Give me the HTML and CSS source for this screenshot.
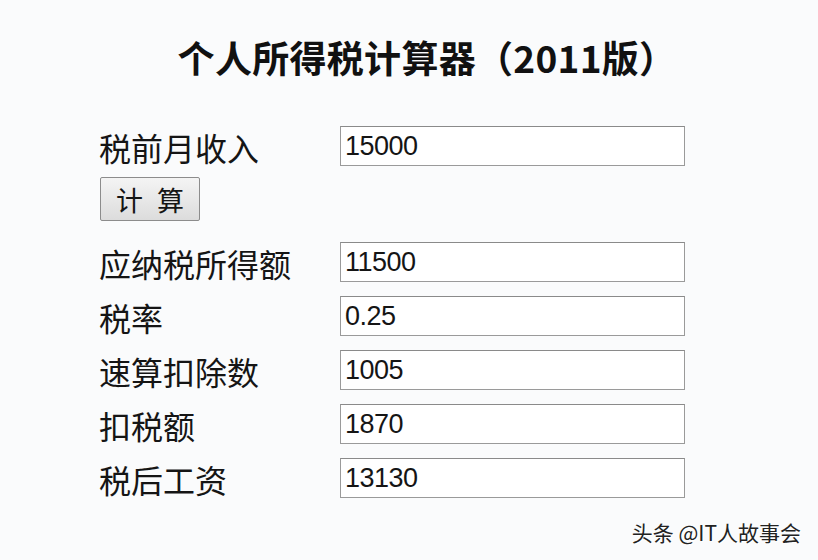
FILE: index.html
```html
<!DOCTYPE html>
<html lang="zh-CN">
<head>
    <meta charset="UTF-8">
    <title>个人所得税计算器（2011版）</title>
    <link rel="stylesheet" href="styles.css">
</head>
<body>
    <div class="page">
        <h1 class="title">个人所得税计算器（2011版）</h1>

        <!-- 输入区 -->
        <div class="form">
            <label class="label">税前月收入</label>
            <input class="field" type="text" value="15000">
            <div class="btn-row">
                <button class="calc-btn">计 算</button>
            </div>
            <label class="label">应纳税所得额</label>
            <input class="field" type="text" value="11500">
            <label class="label">税率</label>
            <input class="field" type="text" value="0.25">
            <label class="label">速算扣除数</label>
            <input class="field" type="text" value="1005">
            <label class="label">扣税额</label>
            <input class="field" type="text" value="1870">
            <label class="label">税后工资</label>
            <input class="field" type="text" value="13130">
        </div>
    </div>

    <div class="watermark">头条 @IT人故事会</div>
</body>
</html>
```

FILE: styles.css
```css
/* 基础样式 */
body {
    margin: 0;
    background: #fafbfc;
    color: #111;
    font-family: 'Liberation Sans', 'Noto Sans CJK SC', sans-serif;
    height: 560px;
    position: relative;
    overflow: hidden;
}

.page {
    padding-top: 30px;
}

/* 标题 */
.title {
    margin: 0 0 42px;
    text-align: center;
    font-size: 37px;
    line-height: 54px;
    font-weight: bold;
    font-family: 'Noto Sans CJK SC', sans-serif;
    color: #111;
    padding-left: 36px;
    letter-spacing: 0.3px;
}

/* 表单 */
.form {
    margin-left: 100px;
    width: 585px;
    display: grid;
    grid-template-columns: 240px 345px;
    row-gap: 14px;
    align-items: center;
}

.label {
    font-family: 'Noto Sans CJK SC', sans-serif;
    font-size: 32px;
    line-height: 37px;
    height: 40px;
    box-sizing: border-box;
    padding-top: 3px;
    color: #151515;
    margin-left: -1px;
}

.field {
    box-sizing: border-box;
    height: 40px;
    width: 345px;
    margin: 0;
    padding: 0 4px;
    border: 1px solid #9a9a9a;
    border-top-color: #8a8a8a;
    background: #fff;
    font-family: 'Liberation Sans', sans-serif;
    font-size: 27px;
    letter-spacing: -0.5px;
    color: #151515;
}

.btn-row {
    grid-column: 1 / 3;
    margin: -3px 0 7px;
}

.calc-btn {
    width: 100px;
    height: 44px;
    border: 1px solid #8c8c8c;
    border-radius: 2px;
    background: linear-gradient(#f4f4f4, #dcdcdc);
    font-family: 'Noto Sans CJK SC', sans-serif;
    font-size: 27px;
    color: #151515;
    padding: 0;
    word-spacing: 8px;
}

/* 水印 */
.watermark {
    position: absolute;
    right: 17px;
    bottom: 13px;
    font-family: 'Noto Sans CJK SC', sans-serif;
    font-size: 21px;
    color: #222;
    text-shadow: 1px 1px 0 #fff;
}
```
